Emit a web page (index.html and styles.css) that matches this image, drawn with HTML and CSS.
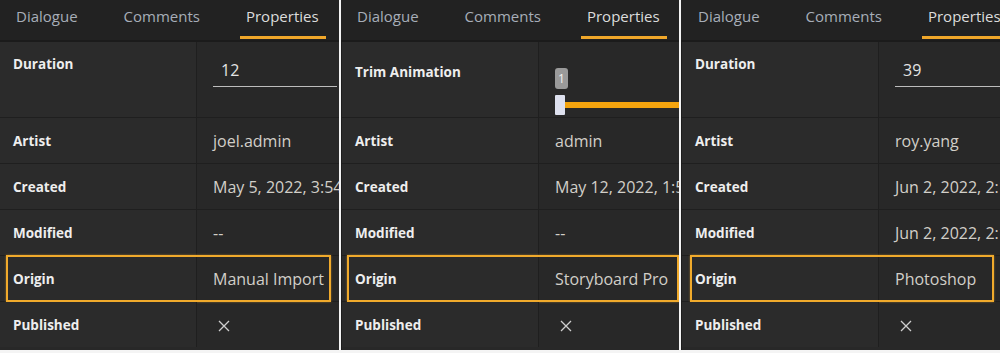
FILE: index.html
```html
<!DOCTYPE html>
<html lang="en">
<head>
    <meta charset="UTF-8">
    <title>Properties panels</title>
    <link rel="stylesheet" href="styles.css">
</head>
<body>
    <div class="shots">

        <!-- panel 1 -->
        <div class="panel p1">
            <div class="tabs">
                <span class="tab">Dialogue</span>
                <span class="tab">Comments</span>
                <span class="tab active">Properties</span>
            </div>
            <div class="rows">
                <div class="row tall">
                    <div class="label">Duration</div>
                    <div class="value"><div class="field">12</div></div>
                </div>
                <div class="row">
                    <div class="label">Artist</div>
                    <div class="value">joel.admin</div>
                </div>
                <div class="row">
                    <div class="label">Created</div>
                    <div class="value">May 5, 2022, 3:54 PM</div>
                </div>
                <div class="row">
                    <div class="label">Modified</div>
                    <div class="value">--</div>
                </div>
                <div class="row">
                    <div class="label">Origin</div>
                    <div class="value">Manual Import</div>
                    <div class="mark"></div>
                </div>
                <div class="row">
                    <div class="label">Published</div>
                    <div class="value"><svg class="cross" width="12" height="12" viewBox="0 0 12 12"><path d="M1 1L11 11M11 1L1 11"/></svg></div>
                </div>
            </div>
        </div>

        <!-- panel 2 -->
        <div class="panel p2">
            <div class="tabs">
                <span class="tab">Dialogue</span>
                <span class="tab">Comments</span>
                <span class="tab active">Properties</span>
            </div>
            <div class="rows">
                <div class="row tall">
                    <div class="label trim">Trim Animation</div>
                    <div class="value">
                        <div class="slider">
                            <span class="bubble">1</span>
                            <div class="track">
                                <span class="thumb"></span>
                                <span class="fill"></span>
                            </div>
                        </div>
                    </div>
                </div>
                <div class="row">
                    <div class="label">Artist</div>
                    <div class="value">admin</div>
                </div>
                <div class="row">
                    <div class="label">Created</div>
                    <div class="value">May 12, 2022, 1:52 PM</div>
                </div>
                <div class="row">
                    <div class="label">Modified</div>
                    <div class="value">--</div>
                </div>
                <div class="row">
                    <div class="label">Origin</div>
                    <div class="value">Storyboard Pro</div>
                    <div class="mark"></div>
                </div>
                <div class="row">
                    <div class="label">Published</div>
                    <div class="value"><svg class="cross" width="12" height="12" viewBox="0 0 12 12"><path d="M1 1L11 11M11 1L1 11"/></svg></div>
                </div>
            </div>
        </div>

        <!-- panel 3 -->
        <div class="panel p3">
            <div class="tabs">
                <span class="tab">Dialogue</span>
                <span class="tab">Comments</span>
                <span class="tab active">Properties</span>
            </div>
            <div class="rows">
                <div class="row tall">
                    <div class="label">Duration</div>
                    <div class="value"><div class="field">39</div></div>
                </div>
                <div class="row">
                    <div class="label">Artist</div>
                    <div class="value">roy.yang</div>
                </div>
                <div class="row">
                    <div class="label">Created</div>
                    <div class="value">Jun 2, 2022, 2:10 PM</div>
                </div>
                <div class="row">
                    <div class="label">Modified</div>
                    <div class="value">Jun 2, 2022, 2:10 PM</div>
                </div>
                <div class="row">
                    <div class="label">Origin</div>
                    <div class="value">Photoshop</div>
                    <div class="mark"></div>
                </div>
                <div class="row">
                    <div class="label">Published</div>
                    <div class="value"><svg class="cross" width="12" height="12" viewBox="0 0 12 12"><path d="M1 1L11 11M11 1L1 11"/></svg></div>
                </div>
            </div>
        </div>

    </div>
</body>
</html>
```

FILE: styles.css
```css
body {
    margin: 0;
    background: #f4f4f4;
    font-family: "Open Sans", "Noto Sans", sans-serif;
}
.shots {
    display: flex;
    gap: 2px;
    height: 350px;
}
.panel {
    background: #222222;
    overflow: hidden;
    flex: none;
    display: flex;
    flex-direction: column;
}
.p1 { width: 339px; }
.p2 { width: 338px; }
.p3 { width: 319px; }
.p2 .rows, .p3 .rows { border-left: 1px solid #1d1d1d; }
.p3 .tabs { padding-left: 17px; }

.tabs {
    height: 40px;
    display: flex;
    align-items: flex-start;
    padding-left: 16px;
    border-bottom: 2px solid #1b1b1b;
    white-space: nowrap;
    flex: none;
}
.tab {
    font-size: 15px;
    color: #a7aeb8;
    padding-top: 6px;
    margin-right: 46px;
    position: relative;
    height: 34px;
}
.tab.active {
    color: #dcdcdc;
    margin-right: 0;
}
.tab.active::after {
    content: "";
    position: absolute;
    left: -6px;
    right: -7px;
    bottom: 1px;
    height: 3px;
    background: #f0a72a;
}

.rows {
    flex: 1;
    background: #282828;
}
.row {
    display: flex;
    height: 45px;
    border-bottom: 1px solid #1f1f1f;
    position: relative;
}
.row.tall { height: 75px; }
.row:last-child { border-bottom: none; }
.label {
    width: 183px;
    flex: none;
    padding-left: 13px;
    background: #2b2b2b;
    border-right: 1px solid #1f1f1f;
    font-weight: 700;
    font-size: 13.5px;
    color: #eeeeee;
    display: flex;
    align-items: center;
}
.row.tall .label {
    align-items: flex-start;
    padding-top: 13px;
}
.row.tall .label.trim { padding-top: 21px; }
.value {
    flex: 1;
    min-width: 0;
    overflow: hidden;
    padding-left: 16px;
    font-size: 16px;
    color: #d2cfc8;
    display: flex;
    align-items: center;
    white-space: nowrap;
}
.row.tall .value { align-items: flex-start; }

.field {
    margin-top: 17px;
    width: 116px;
    flex: none;
    padding: 0 0 5px 8px;
    border-bottom: 1px solid #bdbdbd;
    color: #e4e4e4;
    font-size: 16px;
}

.slider { margin-top: 24px; }
.bubble {
    display: inline-block;
    background: #9a9a9a;
    color: #f2f2f2;
    font-size: 12px;
    line-height: 21px;
    width: 13px;
    text-align: center;
    border-radius: 3px;
    margin-top: -3px;
}
.track {
    display: flex;
    align-items: center;
    margin-top: 6px;
    height: 20px;
}
.thumb {
    width: 10px;
    height: 20px;
    flex: none;
    background: #dde0ee;
    border-radius: 1px;
}
.fill {
    width: 200px;
    flex: none;
    height: 6px;
    background: #f4a40e;
}

.cross {
    margin-left: 5px;
    margin-top: 3px;
}
.cross path {
    stroke: #cfcfcf;
    stroke-width: 1.3;
    fill: none;
}

.mark {
    position: absolute;
    top: -1px;
    bottom: -1px;
    left: 6px;
    border: 2px solid #f0aa2c;
    box-shadow: 0 0 2px rgba(240, 170, 44, 0.5);
}
.p1 .mark { width: 321px; }
.p2 .mark { left: 5px; width: 328px; }
.p3 .mark { left: 8px; width: 300px; }
```
